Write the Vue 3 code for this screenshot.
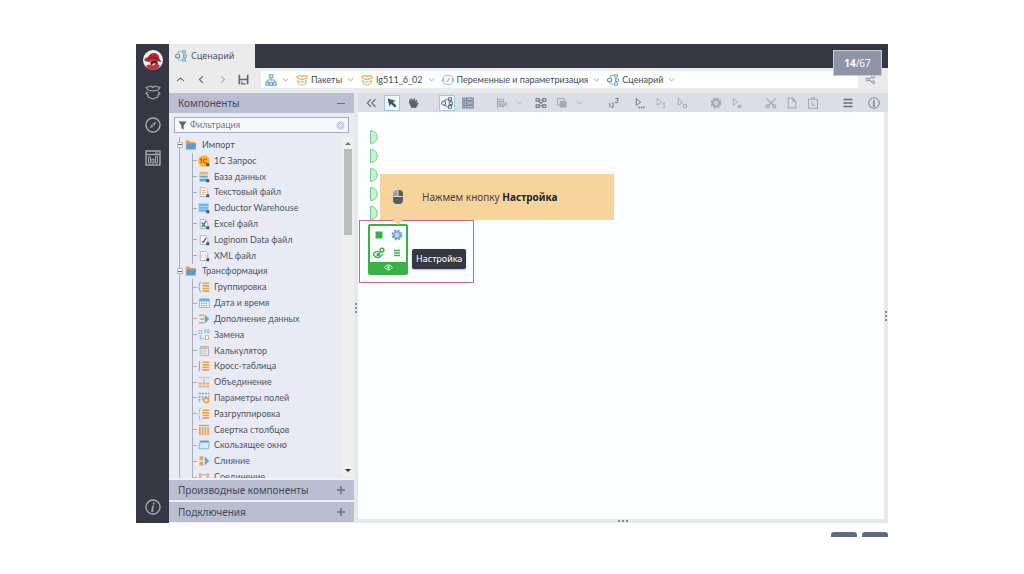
<script setup>
import { ref } from 'vue'

const filter = ref('')

const doc = (inner) =>
  `<path d="M3 2h7l3 3v9H3z" fill="#fafcff" stroke="#9aa7b8"/>${inner}<rect x="11" y="11" width="4" height="4" fill="#4c5468"/>`
const play = (inner) => `<path d="M3 2v9M3 2l6 5-6 4" fill="none" stroke="currentColor" stroke-width="1.2"/>${inner}`
const bars = '<path d="M6 3h9M6 6.500h9M6 10h9M6 13.500h9" stroke="#f0a04b" stroke-width="2.200"/>'

const icons = {
  up: '<path d="M3 10l5-4 5 4" fill="none" stroke="currentColor" stroke-width="1.600"/>',
  left: '<path d="M10 3L5 8l5 5" fill="none" stroke="currentColor" stroke-width="1.600"/>',
  right: '<path d="M6 3l5 5-5 5" fill="none" stroke="currentColor" stroke-width="1.600"/>',
  down: '<path d="M2 6l6 5 6-5" fill="none" stroke="currentColor" stroke-width="1.800"/>',
  save: '<path d="M2 1v14M14 1v14M2 8h12" fill="none" stroke="#5d6779" stroke-width="2.400"/><path d="M5 14.300h6M5.500 14v-3" stroke="#5d6779" stroke-width="1.600"/>',
  sitemap: '<path d="M8 5v3M3 11V8h10v3" fill="none" stroke="#6f9fc0" stroke-width="1.300"/><g fill="#d6ecf8" stroke="#5c9bc4" stroke-width="1.300"><path d="M5.500 1h5v4h-5zM1 11h4v4H1zM6 11h4v4H6zM11 11h4v4h-4z"/></g>',
  pack: '<path d="M2.500 6L1 3.500l5-1.500 2 1.500L10 2l5 1.500L13.500 6 8 7.500z" fill="none" stroke="#efa858" stroke-width="1.500" stroke-linejoin="round"/><path d="M3 8v5l5 2 5-2V8" fill="none" stroke="#efb878" stroke-width="1.400"/><path d="M1 9l2 1.500M15 9l-2 1.500M5 10l3 1 3-1" fill="none" stroke="#7dbbe0" stroke-width="1.300"/>',
  box: '<path d="M3 6L1 3.500l5-1.500 2 1.500L10 2l5 1.500L13 6 8 7z" fill="none" stroke="currentColor" stroke-width="1.200" stroke-linejoin="round"/><path d="M3 8L1 9.500 3 11v2l5 2 5-2v-2l2-1.500L13 8" fill="none" stroke="currentColor" stroke-width="1.200" stroke-linejoin="round"/>',
  scenario: '<g fill="none" stroke-width="1.500"><path d="M4 5c0-3 2-3.500 5-3" stroke="#efa040"/><circle cx="3.500" cy="8" r="2.700" stroke="#4a91c6"/><path d="M4 11c0 3 2 3 5 2.500M11.500 5v6" stroke="#7fb4da" stroke-width="1.200"/><path d="M10 1h4v3h-4zM11.500 6.500H15V10h-3.500zM10 12h4v3h-4z" stroke="#60a0cf" stroke-width="1.300"/></g>',
  variable: '<rect x="2" y="2" width="12" height="12" rx="3" fill="#f8fbfd" stroke="#9abbd0" stroke-width="1.200"/><path d="M7 11l3-6M.5 6v4M15.500 6v4" stroke="#79a2bc" stroke-width="1.200"/>',
  share: '<g fill="none" stroke="currentColor" stroke-width="1.300"><circle cx="3.500" cy="8" r="2.200"/><circle cx="12" cy="4" r="2"/><circle cx="12" cy="12" r="2"/><path d="M5.500 7l4.500-2M5.500 9l4.500 2"/></g>',
  compass: '<g fill="none" stroke="currentColor"><circle cx="8" cy="8" r="7" stroke-width="1.400"/><path d="M11.500 4.500L9 9l-4.500 2.500L7 7z" fill="currentColor" stroke="none"/><path d="M7 7l2 2" stroke="#353843"/></g>',
  columns: '<g fill="none" stroke="currentColor"><path d="M1 1h14v14H1zM1 4.500h14" stroke-width="1.400"/><path d="M3.500 7h2v6h-2zM7 9h2v4H7zM10.500 6.500h2V13h-2z"/><path d="M10 3h3"/></g>',
  info: '<circle cx="8" cy="8" r="7" fill="none" stroke="currentColor" stroke-width="1.300"/><path d="M9 3.500l-.4 2M8.200 6.500L7 12h1.500" fill="none" stroke="currentColor" stroke-width="1.600"/>',
  infoUp: '<circle cx="8" cy="8" r="7" fill="none" stroke="currentColor" stroke-width="1.100"/><path d="M8 4v2M6.500 7H8v5M6.500 12h3" fill="none" stroke="currentColor" stroke-width="1.500"/>',
  funnel: '<path d="M1 1h14L10 8v7l-4-2V8z" fill="#5c6577"/>',
  clear: '<circle cx="8" cy="8" r="7" fill="#c3cddd"/><path d="M5 5l6 6m0-6l-6 6" stroke="#fff" stroke-width="1.600"/>',
  collapse: '<path d="M8 3L3 8l5 5M14 3L9 8l5 5" fill="none" stroke="currentColor" stroke-width="1.600"/>',
  cursor: '<path d="M2 2l11 3-4 1.500 5 5-2.500 2.500-5-5L5 13z" fill="#48505f"/>',
  hand: '<path d="M3 7l1-4 1.500 3L6.500 2 8 5.500 10 2l.5 4L13 4v5l2-1-3 6H6z" fill="#5a6271" stroke="#5a6271" stroke-linejoin="round"/>',
  graph: '<g fill="none" stroke="#687386" stroke-width="1.400"><circle cx="3.500" cy="8" r="2.700"/><path d="M4 5.500L9 2.500M4 10.500L9 13.500M10 1h4v3.500h-4zM11 6.500h4V10h-4zM10 11.500h4V15h-4z"/></g>',
  list: '<g fill="none" stroke="#788396" stroke-width="1.400"><path d="M1 1.500h3v3H1zM6 1.500h9v3H6zM1 6.500h3v3H1zM6 6.500h9v3H6zM1 11.500h3v3H1zM6 11.500h9v3H6z"/></g>',
  align: '<path d="M2 1v14M4 3h6v3H4zM4 8h10v2.500H4zM4 12.500h7" fill="none" stroke="currentColor" stroke-width="1.400"/>',
  nodes: '<g fill="none" stroke="#717b8f" stroke-width="1.500"><path d="M1.500 2h4v3.500h-4zM10.500 2h4v3.500h-4zM1.500 10.500h4V14h-4zM10.500 10.500h4V14h-4zM5.500 4h5M5.500 12h5M5 6l6 4M11 6l-6 4"/></g>',
  layers: '<path d="M2 2h9v9H2z" fill="none" stroke="currentColor" stroke-width="1.300"/><path d="M5 5h9v9H5z" fill="currentColor"/>',
  order: '<path d="M1 9h1.500v5M5 8.500c3-1 3 1 0 5h3M9 7h3M10 2h4l-2 2.500c3 0 2 4-2 3" fill="none" stroke="#70798b" stroke-width="1.300"/>',
  play1: play('<path d="M6 14h2m1 0h2m1 0h2" stroke="currentColor" stroke-width="1.800"/>'),
  play2: play('<path d="M12 7v7M10.500 14h3M10.500 8h2" stroke="currentColor" stroke-width="1.200"/>'),
  play3: play('<circle cx="12" cy="12" r="2.300" fill="none" stroke="currentColor" stroke-width="1.400"/>'),
  play4: play('<path d="M9 14l1.500-3 1.500 3 2-4" fill="none" stroke="currentColor" stroke-width="1.600"/>'),
  gear: '<circle cx="8" cy="8" r="4.500" fill="#cdd3de" stroke="currentColor" stroke-width="2.600"/><circle cx="8" cy="8" r="6.300" fill="none" stroke="currentColor" stroke-width="2" stroke-dasharray="2.950 2"/>',
  cut: '<g fill="none" stroke="currentColor" stroke-width="1.600"><path d="M2 2l9 9M14 2l-9 9"/><circle cx="3.500" cy="12.500" r="2"/><circle cx="12.500" cy="12.500" r="2"/></g>',
  copy: '<path d="M3 1.500h6l4 4v9H3zM9 1.500v4h4" fill="none" stroke="currentColor" stroke-width="1.400"/>',
  paste: '<path d="M2 3h12v12H2zM6 3V1h4v2M7 7v4h4" fill="none" stroke="currentColor" stroke-width="1.400"/>',
  menu: '<path d="M2 3.300h12M2 8h12M2 12.700h12" stroke="#61698a" stroke-width="2"/>',
  folder: '<path d="M1 2h5l1 2h7v8H1z" fill="#e3a050"/><path d="M1 14L3 6h12l-1 8z" fill="#4f9fd8"/>',
  oneC: '<circle cx="8" cy="8" r="7.800" fill="#fbb828"/><path d="M2.500 6L4.500 5v6M12 6c-5-3-7 4-1 5h2" fill="none" stroke="#d94b28" stroke-width="1.600"/><rect x="11" y="11" width="4" height="4" fill="#4c5468"/>',
  db: '<path d="M2 1h11v4H2z" fill="#e8b66d"/><path d="M2 6h11v3H2zM2 10h11v4H2z" fill="#58aadd"/><path d="M2 5.500h11M2 9.500h11" stroke="#dcecf7"/><rect x="11" y="11" width="4" height="4" fill="#4c5468"/>',
  text: doc('<path d="M5 6h5M5 8.500h6M5 11h5" stroke="#e8a565" stroke-width="1.200"/>'),
  warehouse: '<path d="M1 2h13v11H1z" fill="#66b9e8"/><path d="M1 6h13M1 9.500h13" stroke="#b5def5"/><rect x="11" y="11" width="4" height="4" fill="#4c5468"/>',
  excel: doc('<path d="M5 6l5 6M11 4l-6 8" stroke="#3a8a58" stroke-width="1.800"/>'),
  loginom: doc('<path d="M5 10l2 1 4-6" fill="none" stroke="#863548" stroke-width="1.800"/>'),
  xml: doc('<path d="M6 6L4 8.500 6 11M9 6l2 2.500L9 11" fill="none" stroke="#d7b184" stroke-width="1.200"/>'),
  group: `<path d="M4 1C1 1 3 7 1 8c2 1 0 7 3 7" fill="none" stroke="#6bb1dd" stroke-width="1.300"/>${bars}`,
  date: '<path d="M2 3h13v11H2z" fill="#f5faff" stroke="#7aaed0"/><path d="M2 2h13v4H2z" fill="#67afd9"/><path d="M4 8.500h9M4 11.500h9" stroke="#98a7ba" stroke-width="1.500" stroke-dasharray="2 1"/>',
  enrich: '<path d="M1 3h7M3 8h5M1 13h7" stroke="#f0a04b" stroke-width="2.200"/><path d="M9 2l6 6-6 6z" fill="#58aadd"/>',
  replace: '<path d="M1 2h4v4H1zM9 1h2v4H9zM13 1h2v4h-2z" fill="none" stroke="#7db5da"/><path d="M3 8v5h5" fill="none" stroke="#7db5da" stroke-width="1.300"/><path d="M10 9h4v5h-4z" fill="#fff" stroke="#e7ac66" stroke-width="1.400"/>',
  calc: '<path d="M3 2h11v12H3z" fill="#e9edf2" stroke="#9ca7b2"/><path d="M4 3h9v2.500H4z" fill="#efae5c"/><path d="M5 8h7M5 11h7" stroke="#96a5b5" stroke-width="1.500" stroke-dasharray="1.500 1"/>',
  cross: `<path d="M2 2v13" stroke="#6bb1dd" stroke-width="1.500"/>${bars}`,
  union: '<path d="M1 2h4M6 2h4M11 2h4M8 4v4" fill="none" stroke="#a4c9e3" stroke-width="2"/><path d="M1 10h14M1 14h14" stroke="#eaaa69" stroke-width="2.400" stroke-dasharray="4 1"/>',
  params: '<path d="M1 2h14M2 5v9M6 5v6M10 5v3M14 5v3" stroke="#77b5df" stroke-width="2" stroke-dasharray="3 1"/><circle cx="11" cy="11" r="3" fill="#fff" stroke="#eea14a" stroke-width="2.500"/>',
  ungroup: `<path d="M4 1H2v5L1 8l1 2v5h2" fill="none" stroke="#6bb1dd" stroke-width="1.300" stroke-dasharray="2 1"/>${bars}`,
  fold: '<path d="M1 2h14" stroke="#6bb1dd" stroke-width="1.600"/><path d="M2.500 4v11M6.200 4v11M9.900 4v11M13.500 4v11" stroke="#f0a04b" stroke-width="2.200"/>',
  window: '<path d="M3 3h12l-1 10H1z" fill="#d7ecf8" stroke="#65a8d2"/><path d="M3 3.500h11" stroke="#4b9fd5" stroke-width="2.500"/>',
  merge: '<path d="M2 2h5v5H2zM2 9h5v5H2z" fill="#f0a04b"/><path d="M9 2l6 6-6 6z" fill="#58aadd"/>',
  join: '<path d="M1 3h4v11H1z" fill="#eeb080"/><path d="M6 5h4" stroke="#70aed5" stroke-width="1.500"/><path d="M11 3h4v11h-4z" fill="#eeb080"/>',
  eye: '<path d="M1 8q7-9 14 0q-7 9-14 0z" fill="none" stroke="currentColor" stroke-width="1.600"/><circle cx="8" cy="8" r="2.200" fill="currentColor"/>',
  eyeGear: '<path d="M0 10q5-7 10-2M0 10q7 9 13-1" fill="none" stroke="currentColor" stroke-width="1.800"/><circle cx="7" cy="10" r="2.500" fill="currentColor"/><circle cx="12" cy="4" r="2.500" fill="none" stroke="currentColor" stroke-width="2"/>',
  stop: '<path d="M1 1h14v14H1z" fill="currentColor"/>',
  rows: '<path d="M2 3h12M2 8h12M2 13h12" stroke="currentColor" stroke-width="3"/>'
}

const rail = [
  { icon: 'box', name: 'Пакеты' },
  { icon: 'compass', name: 'Навигация' },
  { icon: 'columns', name: 'Процессы' }
]

const crumbs = [
  { icon: 'sitemap', label: '' },
  { icon: 'pack', label: 'Пакеты' },
  { icon: 'pack', label: 'lg511_6_02' },
  { icon: 'variable', label: 'Переменные и параметризация' },
  { icon: 'scenario', label: 'Сценарий' }
]

const tools = [
  { buttons: [{ i: 'collapse' }, { i: 'cursor', on: true }, { i: 'hand' }] },
  { buttons: [{ i: 'graph', on: true }, { i: 'list' }] },
  { buttons: [{ i: 'align', off: true }, { i: 'down', off: true, small: true }] },
  { near: true, buttons: [{ i: 'nodes' }, { i: 'layers', off: true }, { i: 'down', off: true, small: true }] },
  { far: true, buttons: [{ i: 'order' }] },
  { near: true, buttons: [{ i: 'play1' }, { i: 'play2', off: true }, { i: 'play3', off: true }] },
  { buttons: [{ i: 'gear', off: true }, { i: 'play4', off: true }] },
  { buttons: [{ i: 'cut', off: true }, { i: 'copy', off: true }, { i: 'paste', off: true }] },
  { buttons: [{ i: 'menu' }, { i: 'infoUp' }] }
]

const tree = [
  {
    label: 'Импорт',
    items: [
      ['oneC', '1С Запрос'], ['db', 'База данных'], ['text', 'Текстовый файл'],
      ['warehouse', 'Deductor Warehouse'], ['excel', 'Excel файл'],
      ['loginom', 'Loginom Data файл'], ['xml', 'XML файл']
    ]
  },
  {
    label: 'Трансформация',
    items: [
      ['group', 'Группировка'], ['date', 'Дата и время'], ['enrich', 'Дополнение данных'],
      ['replace', 'Замена'], ['calc', 'Калькулятор'], ['cross', 'Кросс-таблица'],
      ['union', 'Объединение'], ['params', 'Параметры полей'], ['ungroup', 'Разгруппировка'],
      ['fold', 'Свертка столбцов'], ['window', 'Скользящее окно'], ['merge', 'Слияние'],
      ['join', 'Соединение']
    ]
  }
]
</script>

<template>
  <div class="page">
    <main class="app">
      <nav class="rail">
        <svg class="logo" viewBox="0 0 20 20">
          <circle cx="10" cy="10" r="10" fill="#f6f2f2" />
          <path d="M1 10q2-3 4-3 2-4 6-4 4 0 5 4l1 3q2 1 1 2l-5-1q-4-1-7 1-3 0-5-2z" fill="#b3292c" />
          <path d="M7 12q3-2 7-1l1 3-4 2-3-1z" fill="#4f2125" />
          <path d="M9 14l3-1 1 1-3 2z" fill="#e9c8bd" />
          <path d="M3 16q3-3 7 0l5-2 2 2q-3 4-7 4-5 0-7-4z" fill="#c23335" />
          <path d="M6 8q4-2 9 1" fill="none" stroke="#7d1b1f" stroke-width="1" />
        </svg>
        <button v-for="r in rail" :key="r.icon" :aria-label="r.name">
          <svg viewBox="0 0 16 16" v-html="icons[r.icon]" />
        </button>
        <button class="about" aria-label="О программе"><svg viewBox="0 0 16 16" v-html="icons.info" /></button>
      </nav>

      <div class="work">
        <header class="tabs">
          <button class="tab"><svg viewBox="0 0 16 16" v-html="icons.scenario" />Сценарий</button>
          <div class="counter"><b>14</b>/67</div>
        </header>

        <div class="path">
          <div class="history">
            <button v-for="h in ['up', 'left', 'right', 'save']" :key="h" :class="h" :aria-label="h">
              <svg viewBox="0 0 16 16" v-html="icons[h]" />
            </button>
          </div>
          <div class="crumbs">
            <button v-for="(c, n) in crumbs" :key="n" class="crumb" :aria-label="c.label || 'Корень'">
              <svg viewBox="0 0 16 16" v-html="icons[c.icon]" />
              <span v-if="c.label">{{ c.label }}</span>
              <svg class="caret" viewBox="0 0 16 16" v-html="icons.down" />
            </button>
          </div>
          <button class="share" aria-label="Связи"><svg viewBox="0 0 16 16" v-html="icons.share" /></button>
        </div>

        <div class="body">
          <aside class="side">
            <button class="head">Компоненты<span class="sign"></span></button>
            <div class="panel">
              <label class="filter">
                <svg viewBox="0 0 16 16" v-html="icons.funnel" />
                <input v-model="filter" type="text" placeholder="Фильтрация" aria-label="Фильтрация">
                <svg viewBox="0 0 16 16" v-html="icons.clear" />
              </label>
              <div class="scroll">
                <div class="tree">
                  <template v-for="g in tree" :key="g.label">
                    <div class="row folder">
                      <span class="toggle"></span>
                      <svg viewBox="0 0 16 16" v-html="icons.folder" />{{ g.label }}
                    </div>
                    <div v-for="[icon, label] in g.items" :key="label" class="row leaf">
                      <svg viewBox="0 0 16 16" v-html="icons[icon]" />{{ label }}
                    </div>
                  </template>
                </div>
                <div class="track"><i class="arrow top"></i><i class="thumb"></i><i class="arrow bottom"></i></div>
              </div>
            </div>
            <button class="head">Производные компоненты<span class="sign plus"></span></button>
            <button class="head">Подключения<span class="sign plus"></span></button>
          </aside>

          <div class="splitter"><i></i><i></i><i></i></div>

          <section class="main">
            <div class="toolbar">
              <div v-for="(g, n) in tools" :key="n" class="group" :class="{ near: g.near, far: g.far }">
                <button v-for="(t, k) in g.buttons" :key="k" :class="{ on: t.on, off: t.off, small: t.small }" :aria-label="t.i">
                  <svg viewBox="0 0 16 16" v-html="icons[t.i]" />
                </button>
              </div>
            </div>
            <div class="stage">
              <div class="canvas">
                <svg class="ports" viewBox="0 0 10 94">
                  <g fill="#c2f5cc" stroke="#7fc592">
                    <path v-for="y in [0, 19, 38, 57, 76]" :key="y" :d="`M1.500 ${y + 0.5}v13c9 0 9-13 0-13z`" />
                  </g>
                </svg>
                <div class="highlight"></div>
                <div class="node">
                  <div class="cells">
                    <svg class="small" viewBox="0 0 16 16" v-html="icons.stop" />
                    <svg class="blue" viewBox="0 0 16 16" v-html="icons.gear" />
                    <svg viewBox="0 0 16 16" v-html="icons.eyeGear" />
                    <svg class="small" viewBox="0 0 16 16" v-html="icons.rows" />
                  </div>
                  <div class="foot"><svg viewBox="0 0 16 16" v-html="icons.eye" /></div>
                </div>
                <div class="hint">
                  <svg viewBox="0 0 12 16">
                    <path d="M1 7V5q0-4 4-4h.500v6z" fill="#83a9cb" />
                    <path d="M6.500 1H7q4 0 4 4v2H6.500zM1 8h10v3q0 4-4 4H5q-4 0-4-4z" fill="#515c71" />
                  </svg>
                  <p>Нажмем кнопку <b>Настройка</b></p>
                </div>
                <div class="tip">Настройка</div>
              </div>
              <div class="edge"><i></i><i></i><i></i></div>
            </div>
            <div class="bottom"><i></i><i></i><i></i></div>
          </section>
        </div>
      </div>
    </main>
    <footer class="pager">
      <button aria-label="Назад"></button>
      <button aria-label="Вперёд"></button>
    </footer>
  </div>
</template>

<style>
body { background: #fff; }
</style>

<style scoped>
* { box-sizing: border-box; }
.page {
  display: flex;
  flex-direction: column;
  height: 100vh;
  padding: 44px 136px 37px;
  font: 9px/16px Lato, "Noto Sans", sans-serif;
  color: #50535c;
}
button {
  display: flex;
  align-items: center;
  justify-content: center;
  padding: 0;
  border: 0;
  background: none;
  color: inherit;
  font: inherit;
}
svg { display: block; flex: none; }
.app { display: flex; flex: 1; min-height: 0; }
.rail {
  display: flex;
  flex-direction: column;
  align-items: center;
  gap: 17px;
  width: 33px;
  padding: 6px 0 8px;
  background: #353843;
  color: #a6a9b4;
}
.logo { width: 20px; height: 20px; margin-bottom: -3px; }
.rail button svg { width: 16px; height: 16px; }
.rail .about { margin-top: auto; }
.work { display: flex; flex: 1; flex-direction: column; min-width: 0; background: #ebebec; }
.tabs { position: relative; display: flex; height: 24px; background: #353843; }
.tab { justify-content: flex-start; width: 86px; gap: 4px; padding-left: 6px; background: #ebebec; font-family: "Noto Sans", sans-serif; }
.tab svg { width: 12px; height: 12px; }
.counter {
  position: absolute;
  z-index: 2;
  top: 6px;
  right: 6px;
  width: 49px;
  height: 26px;
  border: 1px solid #c9ccd5;
  background: #8f94a6;
  color: #fff;
  font: 10px/25px "Noto Sans", sans-serif;
  text-align: center;
}
.path { display: flex; align-items: center; height: 25px; padding-bottom: 2px; }
.history { display: flex; align-items: center; gap: 10px; width: 92px; padding-left: 6px; color: #5d6779; }
.history svg { width: 11px; height: 11px; }
.history .right { color: #a9aeb8; }
.crumbs { display: flex; flex: 1; align-items: center; height: 17px; padding-left: 4px; gap: 7px; background: #fdfefe; }
.crumb { gap: 3px; color: #484b53; white-space: nowrap; }
.crumb svg { width: 12px; height: 12px; }
.crumb .caret { width: 7px; height: 7px; margin-left: 2px; color: #8a8f9a; }
.share { width: 30px; padding-right: 6px; color: #7c8290; }
.share svg { width: 11px; height: 11px; }
.body { display: flex; flex: 1; min-height: 0; }
.side { display: flex; flex-direction: column; width: 185px; gap: 2px; padding-bottom: 1px; background: #f1f2f6; }
.head {
  justify-content: space-between;
  flex: none;
  height: 20px;
  padding: 0 9px;
  background: #b9bed1;
  color: #464a57;
  font: 10px/16px "Noto Sans", sans-serif;
}
.sign { width: 8px; height: 8px; background: linear-gradient(#6b7184, #6b7184) center / 8px 1px no-repeat; }
.sign.plus {
  background:
    linear-gradient(#6b7184, #6b7184) center / 8px 2px no-repeat,
    linear-gradient(#6b7184, #6b7184) center / 2px 8px no-repeat;
  opacity: 0.8;
}
.panel { display: flex; flex: 1; flex-direction: column; min-height: 0; margin-top: -2px; background: #e8ebf5; }
.filter {
  display: flex;
  align-items: center;
  flex: none;
  gap: 3px;
  height: 16px;
  margin: 4px 5px;
  padding: 0 3px;
  border: 1px solid #a6adbd;
  background: #f7f8fb;
}
.filter svg { width: 9px; height: 9px; }
.filter input { flex: 1; min-width: 0; padding: 0; border: 0; outline: 0; background: none; color: #555; font: inherit; }
.filter input::placeholder { color: #747985; opacity: 1; }
.scroll { display: flex; flex: 1; min-height: 0; overflow: hidden; }
.tree {
  position: relative;
  display: grid;
  flex: 1;
  grid-auto-rows: 1fr;
  height: 348px;
  background: linear-gradient(#a9adb8, #a9adb8) 10px 0 / 1px 100% no-repeat;
}
.row { position: relative; display: flex; align-items: center; min-height: 0; white-space: nowrap; }
.row svg { width: 12px; height: 12px; }
.folder { padding-left: 16px; gap: 5px; }
.leaf { padding-left: 29px; gap: 4px; }
.leaf::before { content: ""; position: absolute; top: 0; bottom: 0; left: 23px; border-left: 1px solid #a9adb8; }
.leaf::after { content: ""; position: absolute; left: 24px; width: 4px; border-top: 1px solid #a9adb8; }
.toggle {
  position: absolute;
  left: 8px;
  width: 6px;
  height: 6px;
  border: 1px solid #b9bdc8;
  background: linear-gradient(#666b78, #666b78) center / 4px 1px no-repeat #f4f5f8;
}
.track { display: flex; flex-direction: column; align-items: center; width: 12px; padding: 5px 0; background: #efeff0; }
.arrow { border: 3px solid transparent; }
.arrow.top { border-top: 0; border-bottom: 3px solid #777; }
.arrow.bottom { margin-top: auto; border-bottom: 0; border-top: 3px solid #333; }
.thumb { width: 8px; height: 26%; margin-top: 4px; background: #bcbdbf; }
.splitter { display: flex; flex-direction: column; align-items: center; justify-content: center; gap: 2px; width: 4px; background: #e6e8ea; }
.splitter i, .edge i, .bottom i { width: 2px; height: 2px; background: #868b94; }
.main { display: flex; flex: 1; flex-direction: column; min-width: 0; }
.toolbar { display: flex; align-items: center; gap: 18px; height: 19px; padding: 0 6px 0 5px; background: #dbdee7; color: #697386; }
.group { display: flex; align-items: center; gap: 5px; }
.near { margin-left: -8px; }
.far { margin-left: 5px; }
.group:last-child { gap: 10px; margin-left: auto; }
.group button { width: 16px; height: 16px; border: 1px solid transparent; }
.group svg { width: 12px; height: 12px; }
.group .on { border-color: #9ccbe0; background: #eef8fc; }
.group .off { color: #a3a9b6; }
.group .small { width: 8px; }
.group .small svg { width: 7px; height: 7px; }
.stage { display: flex; flex: 1; min-height: 0; }
.canvas { position: relative; flex: 1; background: #fafeff; }
.edge { display: flex; flex-direction: column; align-items: center; justify-content: center; gap: 2px; width: 4px; background: #e7e9ea; }
.bottom { display: flex; align-items: center; justify-content: center; gap: 2px; height: 4px; background: #e7e9ea; }
.ports { position: absolute; top: 18px; left: 11px; width: 10px; height: 94px; }
.highlight { position: absolute; top: 108px; left: 1px; width: 115px; height: 63px; border: 1px solid #d85f80; }
.node {
  position: absolute;
  top: 112px;
  left: 10px;
  width: 40px;
  height: 51px;
  border: 2px solid #38b148;
  border-radius: 2px;
  background: #fff;
  color: #38b148;
}
.cells { display: grid; grid-template-columns: 1fr 1fr; grid-template-rows: 17px 19px; align-items: center; justify-items: center; }
.cells svg { width: 12px; height: 12px; }
.cells .small { width: 8px; height: 8px; }
.cells .blue { color: #70a6e2; }
.foot { display: flex; align-items: center; justify-content: center; height: 11px; background: #38b148; color: #fff; }
.foot svg { width: 9px; height: 9px; }
.hint {
  position: absolute;
  top: 62px;
  left: 22px;
  display: flex;
  align-items: center;
  gap: 18px;
  width: 234px;
  height: 46px;
  padding-left: 12px;
  background: #f8d49d;
  color: #45413c;
  font: 10px/16px "Noto Sans", sans-serif;
}
.hint::after { content: ""; position: absolute; top: 100%; left: 13px; border: 5px solid transparent; border-top-color: #f8d49d; border-bottom: 0; }
.hint svg { width: 12px; height: 16px; }
.hint p { margin: 0; }
.hint b { color: #222; }
.tip {
  position: absolute;
  top: 137px;
  left: 54px;
  padding: 2px 4px;
  border-radius: 2px;
  background: #353843;
  box-shadow: 0 1px 2px #8888;
  color: #fff;
  font-family: "Noto Sans", sans-serif;
}
.pager { display: flex; justify-content: flex-end; gap: 5px; height: 14px; padding-top: 9px; }
.pager button { width: 26px; height: 5px; border-radius: 3px 3px 0 0; background: #626c7d; }
</style>
